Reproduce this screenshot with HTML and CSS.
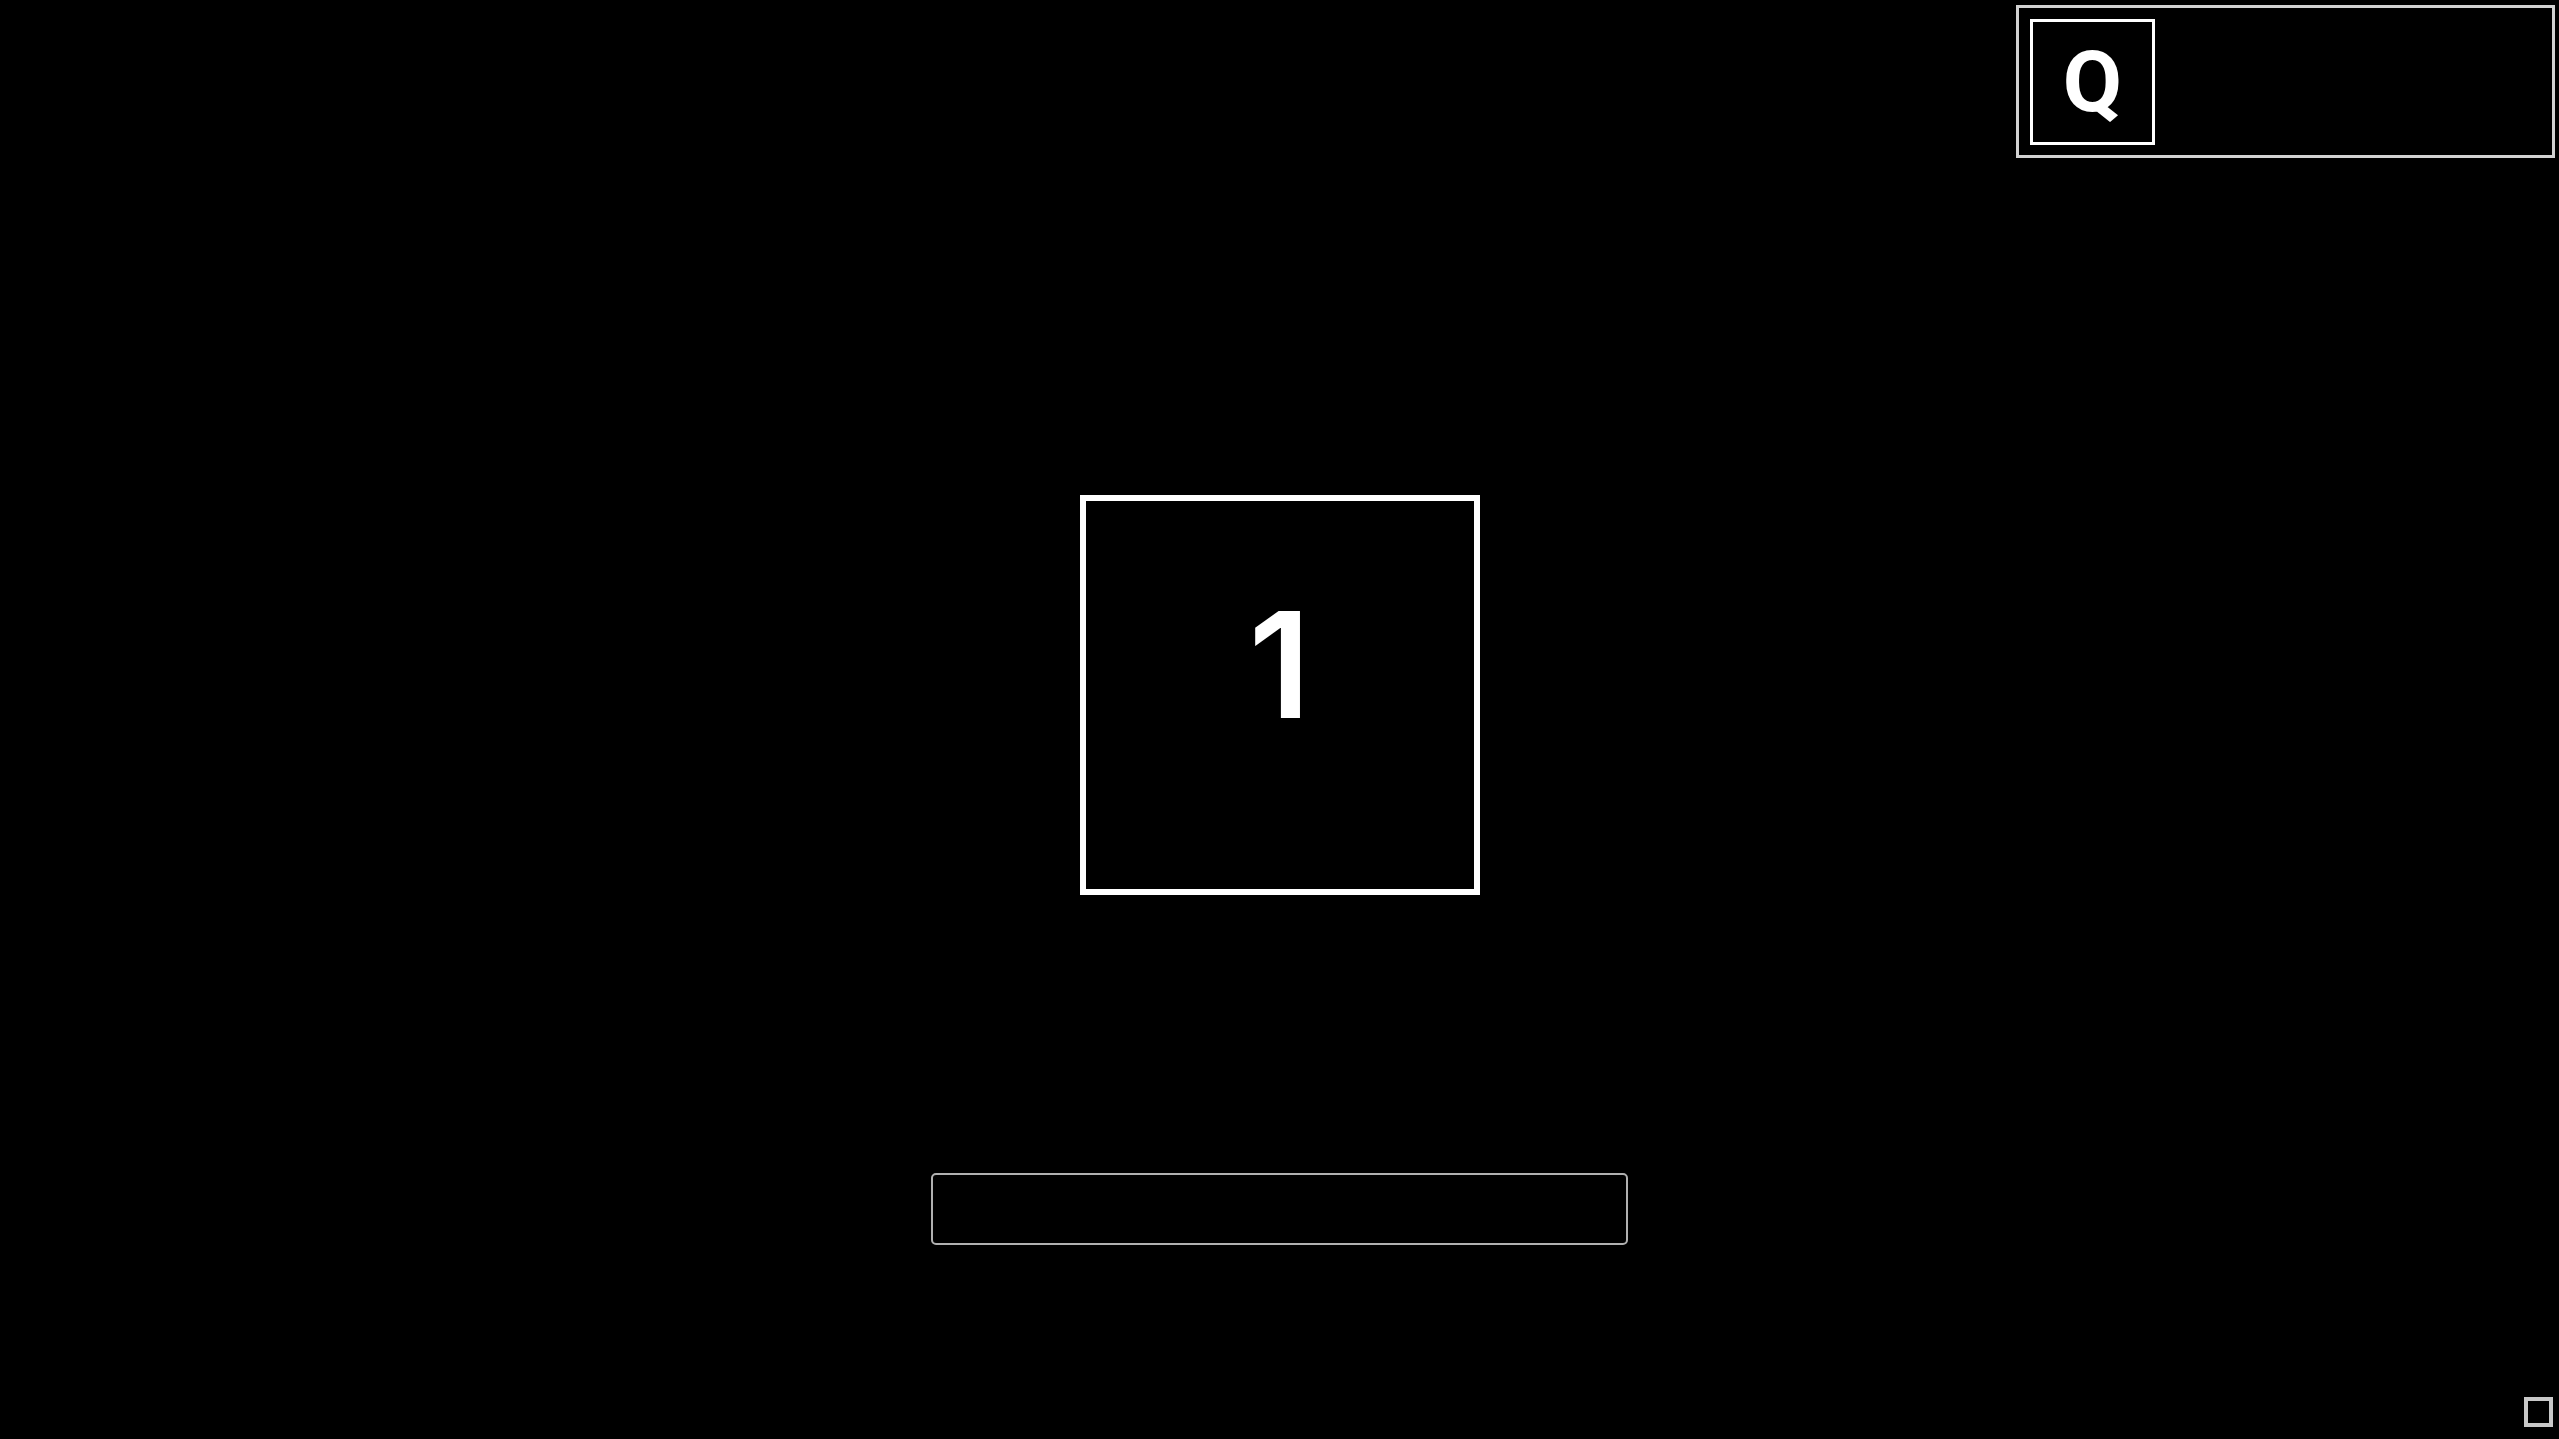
FILE: index.html
```html
<!DOCTYPE html>
<html lang="en">
<head>
<meta charset="utf-8">
<title>Counter</title>
<link rel="stylesheet" href="styles.css">
</head>
<body>
<div class="page">
  <header class="topbar">
    <div class="panel">
      <div class="q-key">Q</div>
    </div>
  </header>
  <main class="stage">
    <div class="counter"><span class="count">1</span></div>
    <input class="answer" type="text" aria-label="answer">
  </main>
  <div class="corner-toggle"></div>
</div>
</body>
</html>
```

FILE: styles.css
```css
html, body {
  margin: 0;
  padding: 0;
  background: #000;
}

body {
  width: 2559px;
  height: 1439px;
  overflow: hidden;
  font-family: Roboto, "Liberation Sans", sans-serif;
  color: #fff;
}

.page {
  position: relative;
  width: 100%;
  height: 100%;
  display: flex;
  flex-direction: column;
}

.topbar {
  display: flex;
  justify-content: flex-end;
  padding: 5px 4px 0 0;
}

.panel {
  box-sizing: border-box;
  width: 539px;
  border: 3px solid #d2d2d2;
  padding: 11px 11px 10px 11px;
  display: flex;
}

.q-key {
  box-sizing: border-box;
  width: 125px;
  height: 126px;
  border: 3px solid #fff;
  display: flex;
  align-items: center;
  justify-content: center;
  font-family: Roboto, "Liberation Sans", sans-serif;
  font-weight: 700;
  font-size: 86px;
  line-height: 1;
  color: #fff;
}

.stage {
  display: flex;
  flex-direction: column;
  align-items: center;
  padding-top: 337px;
}

.counter {
  box-sizing: border-box;
  width: 400px;
  height: 400px;
  border: 6px solid #fff;
  display: flex;
  justify-content: center;
  align-items: flex-start;
  padding-top: 90px;
}

.count {
  font-family: Inter, Roboto, "Liberation Sans", sans-serif;
  font-weight: 600;
  font-size: 147px;
  line-height: 1;
  color: #fff;
}

.answer {
  box-sizing: border-box;
  margin-top: 278px;
  width: 697px;
  height: 72px;
  background: #000;
  border: 2px solid #b0b0b0;
  border-radius: 5px;
  outline: none;
  color: #fff;
  font-family: Roboto, "Liberation Sans", sans-serif;
  font-size: 32px;
  padding: 0 16px;
}

.corner-toggle {
  position: absolute;
  right: 6px;
  bottom: 12px;
  box-sizing: border-box;
  width: 29px;
  height: 30px;
  border: 4px solid #c8c8c8;
}
```
